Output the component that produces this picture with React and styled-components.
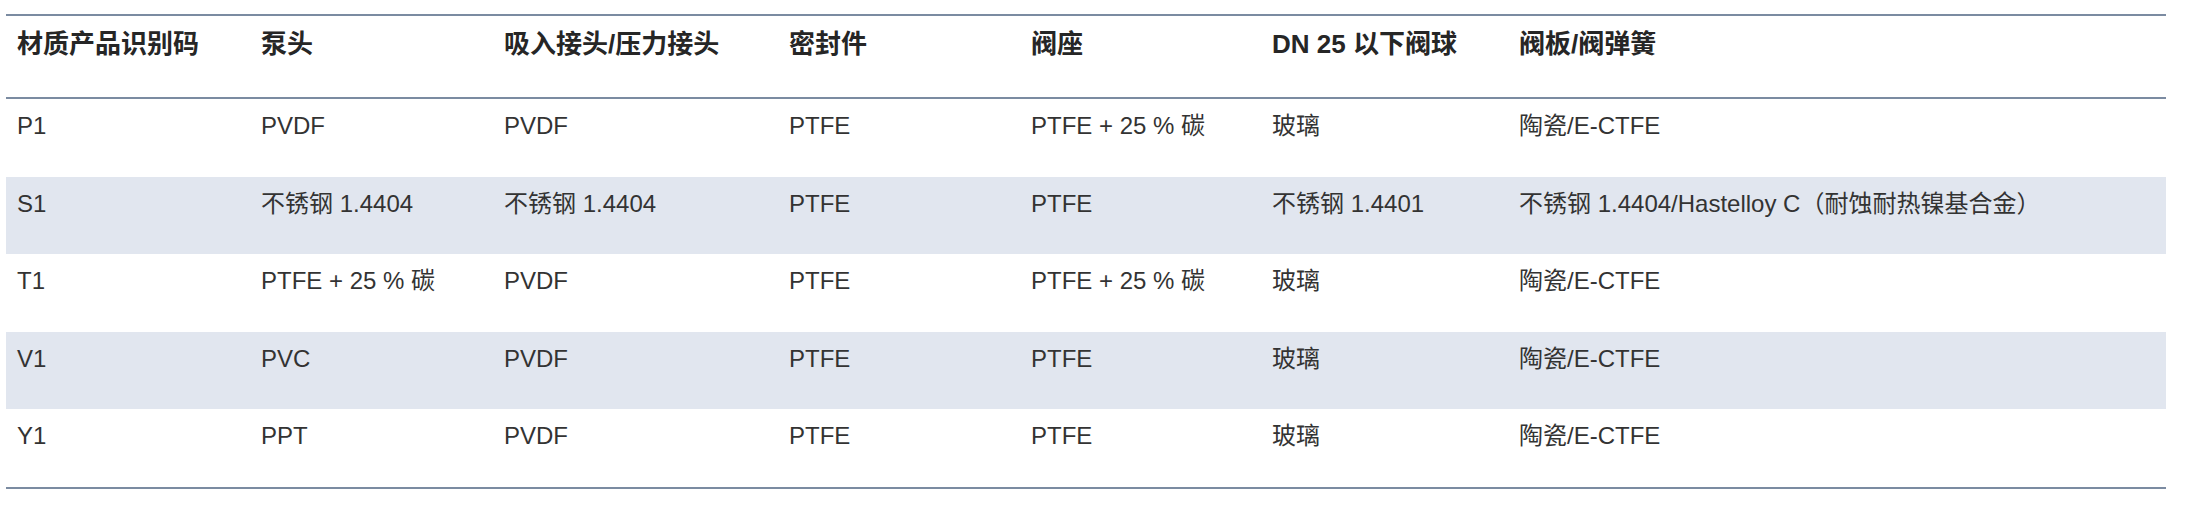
import styled, { createGlobalStyle } from "styled-components";

const GlobalStyle = createGlobalStyle`
    body {
        margin: 0;
        background: #ffffff;
        font-family: "Liberation Sans", "Noto Sans CJK SC", sans-serif;
    }
`;

const columns = [
    { title: "材质产品识别码", width: 244 },
    { title: "泵头", width: 243 },
    { title: "吸入接头/压力接头", width: 285 },
    { title: "密封件", width: 242 },
    { title: "阀座", width: 241 },
    { title: "DN 25 以下阀球", width: 247 },
    { title: "阀板/阀弹簧" },
];

const rows = [
    ["P1", "PVDF", "PVDF", "PTFE", "PTFE + 25 % 碳", "玻璃", "陶瓷/E-CTFE"],
    ["S1", "不锈钢 1.4404", "不锈钢 1.4404", "PTFE", "PTFE", "不锈钢 1.4401", "不锈钢 1.4404/Hastelloy C（耐蚀耐热镍基合金）"],
    ["T1", "PTFE + 25 % 碳", "PVDF", "PTFE", "PTFE + 25 % 碳", "玻璃", "陶瓷/E-CTFE"],
    ["V1", "PVC", "PVDF", "PTFE", "PTFE", "玻璃", "陶瓷/E-CTFE"],
    ["Y1", "PPT", "PVDF", "PTFE", "PTFE", "玻璃", "陶瓷/E-CTFE"],
];

export default function App() {
    return (
        <Page>
            <GlobalStyle />
            <MaterialTable>
                <colgroup>
                    {columns.map((c, index) => (
                        <col key={index} style={c.width ? { width: c.width } : undefined} />
                    ))}
                </colgroup>
                <thead>
                    <tr>
                        {columns.map((c) => (
                            <HeadCell key={c.title}>{c.title}</HeadCell>
                        ))}
                    </tr>
                </thead>
                <tbody>
                    {rows.map((r, index) => (
                        <Row key={r[0]} $striped={index % 2 === 1}>
                            {r.map((cell, i) => (
                                <Cell key={i}>{cell}</Cell>
                            ))}
                        </Row>
                    ))}
                </tbody>
            </MaterialTable>
        </Page>
    );
}

const Page = styled.div`
    padding: 14px 21px 16px 6px;
`;

const MaterialTable = styled.table`
    width: 2160px;
    table-layout: fixed;
    border-collapse: collapse;
    border-top: 2px solid #7b8ba1;
    border-bottom: 2px solid #7b8ba1;
    thead tr {
        border-bottom: 2px solid #7b8ba1;
    }
`;

const HeadCell = styled.th`
    text-align: left;
    vertical-align: top;
    padding: 10px 11px 35px;
    font-size: 26px;
    line-height: 36px;
    font-weight: 700;
    color: #262626;
    white-space: nowrap;
`;

const Row = styled.tr`
    background-color: ${(p) => (p.$striped ? "#e1e6ef" : "#ffffff")};
`;

const Cell = styled.td`
    vertical-align: top;
    padding: 10px 11px 34px;
    font-size: 24px;
    line-height: 33.6px;
    color: #333333;
    white-space: nowrap;
`;
